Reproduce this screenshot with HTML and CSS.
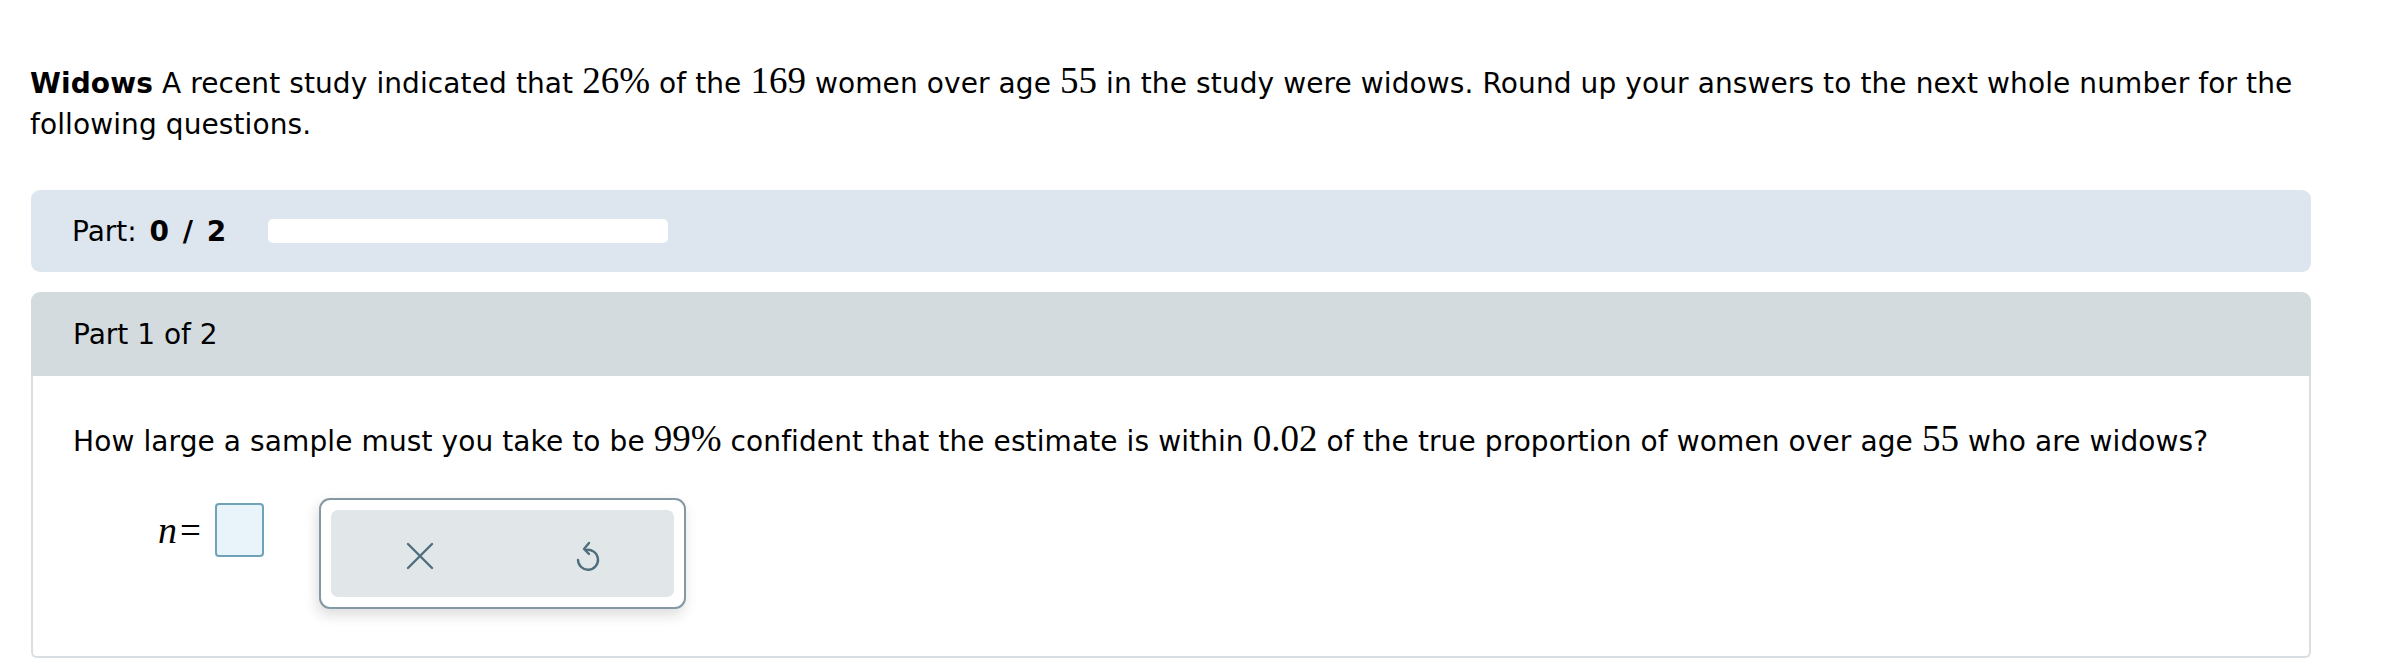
FILE: index.html
```html
<!DOCTYPE html>
<html>
<head>
<meta charset="utf-8">
<link rel="stylesheet" href="styles.css">
</head>
<body>
<div class="page">
  <p class="intro"><b>Widows</b> A recent study indicated that <span class="m">26%</span> of the <span class="m">169</span> women over age <span class="m">55</span> in the study were widows. Round up your answers to the next whole number for the following questions.</p>

  <div class="partbar">
    <span class="partlabel">Part: <b>0 / 2</b></span>
    <span class="track"></span>
  </div>

  <div class="panel">
    <div class="panel-head">Part 1 of 2</div>
    <div class="panel-body">
      <p class="question">How large a sample must you take to be <span class="m">99%</span> confident that the estimate is within <span class="m">0.02</span> of the true proportion of women over age <span class="m">55</span> who are widows?</p>
      <div class="answer-row">
        <div class="answer">
          <span class="mvar">n</span><span class="meq">=</span>
          <span class="inputbox"></span>
        </div>
        <div class="keypad">
          <div class="keys">
            <div class="key key-clear">
              <svg width="28" height="28" viewBox="0 0 28 28"><path d="M2 2 L26 26 M26 2 L2 26" fill="none" stroke="#4f6e7b" stroke-width="2.4" stroke-linecap="round"/></svg>
            </div>
            <div class="key">
              <svg width="28" height="34" viewBox="0 0 28 34"><path d="M12 11 A10 10 0 1 1 4 21" fill="none" stroke="#4f6e7b" stroke-width="2.4" stroke-linecap="round"/><path d="M15 4 L10 10 L15 15" fill="none" stroke="#4f6e7b" stroke-width="2.4" stroke-linecap="round" stroke-linejoin="round"/></svg>
            </div>
          </div>
        </div>
      </div>
    </div>
  </div>
</div>
</body>
</html>
```

FILE: styles.css
```css
html, body {
  margin: 0;
  padding: 0;
  background: #fff;
}
body {
  font-family: "DejaVu Sans", Verdana, sans-serif;
  font-size: 28px;
  color: #000;
}
.page {
  width: 2280px;
  margin-left: 31px;
  padding-top: 63px;
}
.intro {
  margin: 0;
  line-height: 41px;
  margin-left: -1px;
  letter-spacing: 0.1px;
}
.m {
  font-family: "Liberation Serif", "Times New Roman", serif;
  font-size: 37px;
  line-height: 0;
  letter-spacing: 0;
}
.partbar {
  margin-top: 45px;
  height: 82px;
  background: #dde6ef;
  border-radius: 9px;
  display: flex;
  align-items: center;
  padding-left: 41px;
  box-sizing: border-box;
}
.partlabel {
  white-space: nowrap;
}
.partlabel b {
  word-spacing: 4px;
  margin-left: 4px;
}
.track {
  margin-left: 42px;
  width: 400px;
  height: 24px;
  background: #fff;
  border-radius: 5px;
}
.panel {
  margin-top: 20px;
}
.panel-head {
  height: 84px;
  background: #d3dbdf;
  border-radius: 9px 9px 0 0;
  display: flex;
  align-items: center;
  padding-left: 42px;
}
.panel-body {
  border: 2px solid #d8dee1;
  border-top: none;
  border-radius: 0 0 6px 6px;
  padding: 45px 0 47px 40px;
}
.question {
  margin: 0;
  line-height: 41px;
  letter-spacing: 0.1px;
}
.answer-row {
  display: flex;
  align-items: flex-start;
  margin-top: 36px;
}
.answer {
  display: flex;
  align-items: center;
  padding-left: 85px;
  margin-top: 5px;
}
.mvar {
  font-family: "Liberation Serif", "Times New Roman", serif;
  font-style: italic;
  font-size: 38px;
}
.meq {
  font-family: "Liberation Serif", "Times New Roman", serif;
  font-size: 37px;
  margin-left: 3px;
}
.inputbox {
  margin-left: 14px;
  width: 45px;
  height: 50px;
  background: #e8f4f9;
  border: 2px solid #6fa3b8;
  border-radius: 4px;
}
.keypad {
  margin-left: 55px;
  width: 367px;
  height: 111px;
  box-sizing: border-box;
  border: 2px solid #8499a3;
  border-radius: 11px;
  background: #fff;
  padding: 10px;
  box-shadow: -2px 6px 14px rgba(0, 0, 0, 0.14);
}
.keys {
  height: 100%;
  display: flex;
  background: #e1e6e9;
  border-radius: 7px;
}
.key {
  flex: 1 1 0;
  display: flex;
  align-items: center;
  justify-content: center;
  padding-top: 4px;
}
.key-clear svg {
  margin-left: 6px;
}
```
